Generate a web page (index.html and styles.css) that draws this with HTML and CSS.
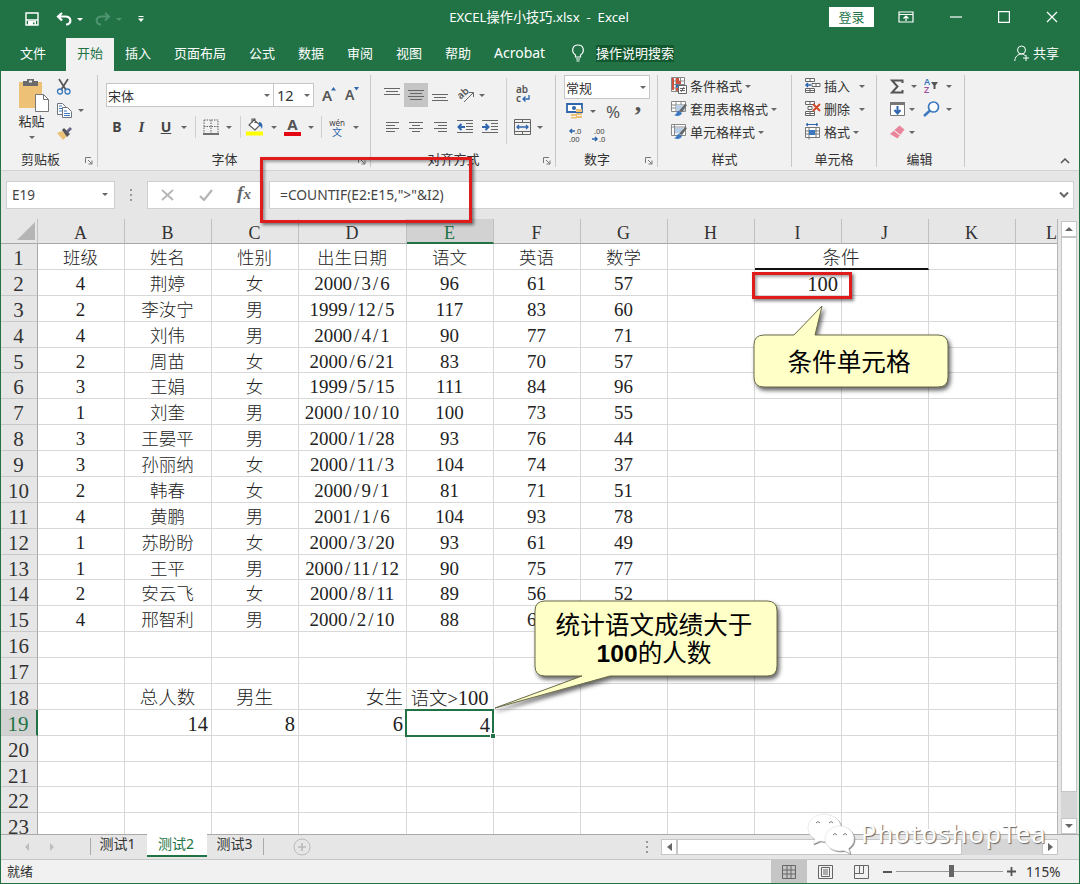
FILE: index.html
```
<!DOCTYPE html>
<html lang="zh-CN">
<head>
  <meta charset="UTF-8" />
  <meta name="viewport" content="width=device-width, initial-scale=1.0" />
  <title>EXCEL操作小技巧.xlsx - Excel</title>
  <link rel="stylesheet" href="styles.css">
</head>
<body>
<div class="window">

  <!-- Title bar -->
  <header class="titlebar">
    <div class="quick">
      <svg width="14" height="14" viewBox="0 0 14 14"><path d="M1 1h12v12H1zM1 8h12" fill="none" stroke="#fff" stroke-width="1.4"/><path d="M3 9h8v4H9.500v-2.500H8V13H3z" fill="#fff"/></svg>
      <svg class="undo" width="17" height="14" viewBox="0 0 17 14"><path d="M6 1L2 4.500L6 8.500M2 4.500h7c7 0 7 8 1 8" fill="none" stroke="#fff" stroke-width="2.200"/></svg>
      <i class="caret light"></i>
      <svg class="redo" width="17" height="14" viewBox="0 0 17 14"><path d="M11 1l4 3.500l-4 4M15 4.500H8c-7 0-7 8-1 8" fill="none" stroke="#4f9470" stroke-width="2"/></svg>
      <i class="caret faded"></i>
      <svg class="more" width="6" height="6" viewBox="0 0 6 6"><path d="M.5 0h5v1h-5zM0 2.500h6L3 6z" fill="#fff"/></svg>
    </div>
    <div class="doc-title">EXCEL操作小技巧.xlsx&nbsp; -&nbsp; Excel</div>
    <div class="win-buttons">
      <button class="login">登录</button>
      <svg width="16" height="12" viewBox="0 0 16 12"><path d="M1 1h14v10H1zM1 3.500h14M8 10V5M5.500 7.500L8 5l2.500 2.500" fill="none" stroke="#fff" stroke-width="1.200"/></svg>
      <svg width="12" height="12" viewBox="0 0 12 12"><path d="M0 6h12" stroke="#fff" stroke-width="1.200"/></svg>
      <svg width="12" height="12" viewBox="0 0 12 12"><path d="M.6.6h10.800v10.800H.6z" fill="none" stroke="#fff" stroke-width="1.200"/></svg>
      <svg width="12" height="12" viewBox="0 0 12 12"><path d="M1 1l10 10M11 1L1 11" stroke="#fff" stroke-width="1.200"/></svg>
    </div>
  </header>

  <!-- Ribbon tabs -->
  <nav class="tabs">
    <span class="tab file">文件</span>
    <span class="tab active">开始</span>
    <span class="tab">插入</span>
    <span class="tab">页面布局</span>
    <span class="tab">公式</span>
    <span class="tab">数据</span>
    <span class="tab">审阅</span>
    <span class="tab">视图</span>
    <span class="tab">帮助</span>
    <span class="tab latin">Acrobat</span>
    <svg class="bulb" width="14" height="18" viewBox="0 0 14 18"><path d="M4.500 13V11C0 8 1 1 7 1s7 7 2.500 10v2zM5 15h4M5.500 17h3" fill="none" stroke="#fff" stroke-width="1.200"/></svg>
    <span class="tell-me">操作说明搜索</span>
    <span class="share">
      <svg width="16" height="17" viewBox="0 0 16 17"><circle cx="7.500" cy="5" r="4" fill="none" stroke="#fff"/><path d="M.8 16c0-4 3-7 6.700-7M7.500 9c2 0 3 .6 4 2M12 10v6M9 13h6" fill="none" stroke="#fff"/></svg>
      共享
    </span>
  </nav>

  <!-- Ribbon -->
  <section class="ribbon">
    <div class="group clipboard">
      <div class="clip-body">
        <div class="paste">
          <svg width="30" height="35" viewBox="0 0 30 35"><path d="M0 4h23v26H0z" fill="#edc277"/><path d="M4 3h4V1h7v2h4v5H4z" fill="#6b6b6b"/><path d="M10 2.500h3v2h-3z" fill="#f1f1f1"/><path d="M16.500 16.500h8l5 5v12h-13z" fill="#fff" stroke="#777"/><path d="M24.500 16.500v5h5" fill="none" stroke="#777"/></svg>
          <span>粘贴</span>
          <i class="caret"></i>
        </div>
        <div class="clip-tools">
          <svg width="16" height="18" viewBox="0 0 16 18"><path d="M3 1l7 11M12 1L5 12" stroke="#555" stroke-width="1.700"/><circle cx="4" cy="13.500" r="2.500" fill="none" stroke="#3b78bd" stroke-width="1.300"/><circle cx="11.500" cy="13.500" r="2.500" fill="none" stroke="#3b78bd" stroke-width="1.300"/></svg>
          <span></span>
          <svg width="17" height="17" viewBox="0 0 17 17"><g fill="#fff" stroke="#6b7480"><path d="M1.500 1.500h5l3 3v8h-8z"/><path d="M6.500 5.500h5l4 4v6h-9z"/></g><path d="M3 4h3M3 6.500h3M3 9h3M8 9h3M8 11.500h6M8 13.500h6" stroke="#3b78bd"/></svg>
          <i class="caret"></i>
          <svg width="16" height="14" viewBox="0 0 16 14"><path d="M1 6l5-2l5 5l-4 4z" fill="#edc277"/><path d="M6 3l2-2l6 6l-3 3z" fill="#555"/><path d="M10 4l4-4l2 2l-4 4z" fill="#666688"/></svg>
        </div>
      </div>
      <div class="label">剪贴板</div>
      <svg class="launcher" viewBox="0 0 8 8"><use href="#launch"/></svg>
    </div>

    <div class="group font">
      <div class="row selects">
        <div class="select name">宋体<i class="caret"></i></div>
        <div class="select size">12<i class="caret"></i></div>
        <span class="grow">A<svg width="5" height="4" viewBox="0 0 5 4"><path d="M0 3.500L2.500 0L5 3.500z" fill="#2f66ad"/></svg></span>
        <span class="grow small">A<svg width="5" height="4" viewBox="0 0 5 4"><path d="M0 0h5L2.500 3.500z" fill="#2f66ad"/></svg></span>
      </div>
      <div class="row styles">
        <b>B</b><em>I</em><u>U</u><i class="caret"></i><i class="sep"></i>
        <svg width="16" height="16" viewBox="0 0 16 16"><path d="M1 1h14v13M1 1v13M8 1v13M1 7.500h14" fill="none" stroke="#666" stroke-dasharray="1.500 1"/><path d="M0 15h16" stroke="#444" stroke-width="1.500"/></svg>
        <i class="caret"></i><i class="sep"></i>
        <svg width="18" height="18" viewBox="0 0 18 18"><path d="M8 2l6 5-5 5-6-5zM6 5V1h3v4" fill="#fff" stroke="#555" stroke-width="1.100"/><path d="M13 4c3 0 4 3 3 7-1-2-1-3-3-3z" fill="#2f66ad"/><path d="M0 13.500h17v4H0z" fill="#ff0"/></svg>
        <i class="caret"></i>
        <span class="font-color">A</span>
        <i class="caret"></i><i class="sep"></i>
        <span class="phonetic"><small>wén</small>文</span>
        <i class="caret"></i>
      </div>
      <div class="label">字体</div>
      <svg class="launcher" viewBox="0 0 8 8"><use href="#launch"/></svg>
    </div>

    <div class="group align">
      <div class="row align-top">
        <svg width="16" height="16" viewBox="0 0 16 16"><path d="M0 1.500h16M2 4.500h12M0 7.500h16" class="ln"/></svg>
        <span class="pressed"><svg width="16" height="16" viewBox="0 0 16 16"><path d="M0 3.500h16M2 6.500h12M0 9.500h16M2 12.500h12" class="ln"/></svg></span>
        <svg width="16" height="16" viewBox="0 0 16 16"><path d="M0 7.500h16M2 10.500h12M0 13.500h16" class="ln"/></svg>
        <svg class="orient" width="18" height="18" viewBox="0 0 18 18"><text x="1" y="11" transform="rotate(-42 6 9)" class="rot">ab</text><path d="M7 16l9-9M12 6.500h4.500V11" class="ln"/></svg>
        <i class="caret"></i><span></span><i class="sep tall"></i>
        <svg class="wrap-icon" width="16" height="20" viewBox="0 0 16 20"><text x="1" y="8" class="wrap">ab</text><text x="1" y="17" class="wrap">c</text><path d="M14 10v4H8M10.500 11.500L8 14l2.500 2.500" fill="none" stroke="#2f66ad" stroke-width="1.300"/></svg>
      </div>
      <div class="row align-bottom">
        <svg width="13" height="12" viewBox="0 0 13 12"><path d="M0 1.500h13M0 4.500h9M0 7.500h13M0 10.500h9" class="ln"/></svg>
        <svg width="14" height="12" viewBox="0 0 14 12"><path d="M0 1.500h14M3 4.500h8M0 7.500h14M3 10.500h8" class="ln"/></svg>
        <svg width="13" height="12" viewBox="0 0 13 12"><path d="M0 1.500h13M4 4.500h9M0 7.500h13M4 10.500h9" class="ln"/></svg>
        <svg width="16" height="14" viewBox="0 0 16 14"><path d="M0 .5h16M9 3.500h7M9 6.500h7M9 9.500h7M0 12.500h16" class="ln"/><path d="M8 7H2M4.500 4L1.500 7l3 3" fill="none" stroke="#2f66ad" stroke-width="2"/></svg>
        <svg width="16" height="14" viewBox="0 0 16 14"><path d="M0 .5h16M9 3.500h7M9 6.500h7M9 9.500h7M0 12.500h16" class="ln"/><path d="M0 7h6M3.500 4l3 3l-3 3" fill="none" stroke="#2f66ad" stroke-width="2"/></svg>
        <i class="sep tall"></i>
        <svg width="17" height="16" viewBox="0 0 17 16"><path d="M.5.500h16v15H.5zM.5 3.500h16M.5 12.500h16M8.500 0v3.500M8.500 12.500V16" class="ln"/><path d="M3 8h11M5 6L3 8l2 2M12 6l2 2l-2 2" fill="none" stroke="#2f66ad" stroke-width="1.300"/></svg>
        <i class="caret"></i>
      </div>
      <div class="label">对齐方式</div>
      <svg class="launcher" viewBox="0 0 8 8"><use href="#launch"/></svg>
    </div>

    <div class="group number">
      <div class="select">常规<i class="caret"></i></div>
      <div class="row money">
        <svg width="18" height="16" viewBox="0 0 18 16"><path d="M1 1h15v8H1z" fill="#fff" stroke="#2f66ad" stroke-width="1.800"/><circle cx="8" cy="5" r="2" fill="#2f66ad"/><path d="M10 6h6v3h-6zM10 10h6v2h-6zM10 13h6v2h-6zM5 11h6v2H5zM5 14h6v1.500H5z" fill="#edc277"/></svg>
        <i class="caret"></i><span class="pct">%</span><span class="comma">,</span>
      </div>
      <div class="row decimals">
        <svg width="16" height="16" viewBox="0 0 16 16"><path d="M7 4H2M4 2L2 4l2 2" fill="none" stroke="#2f66ad" stroke-width="1.500"/><text x="7" y="7" class="dec">.0</text><text x="1" y="15" class="dec">.00</text></svg>
        <svg width="16" height="16" viewBox="0 0 16 16"><text x="2" y="7" class="dec">.00</text><path d="M0 12h5M3 10l2 2l-2 2" fill="none" stroke="#2f66ad" stroke-width="1.500"/><text x="7" y="15" class="dec">.0</text></svg>
      </div>
      <div class="label">数字</div>
      <svg class="launcher" viewBox="0 0 8 8"><use href="#launch"/></svg>
    </div>

    <div class="group style-list">
      <div class="item"><svg width="17" height="17" viewBox="0 0 17 17"><path d="M1.500.500h13v14h-13zM1.500 4h13M1.500 7.500h13M1.500 11h13M6 .5v14M10.500.500v14" fill="#fff" stroke="#888"/><path d="M6 1h3v3H6zM6 11h2v3H6z" fill="#d0533f"/><path d="M6 4h5v3H6zM2 1h2v12H2z" fill="#d0533f"/><path d="M6 7.500h4v3H6z" fill="#2f66ad"/><path d="M8.500 8.500h8v8h-8z" fill="#fff" stroke="#666"/><path d="M10 11.500h5M10 13.500h5M14 10l-3 5" stroke="#444" stroke-width=".8"/></svg>条件格式<i class="caret"></i></div>
      <div class="item"><svg width="17" height="17" viewBox="0 0 17 17"><path d="M1.500 1.500h14v10h-14zM1.500 5h14M1.500 8h14M6 1.500v10M11 1.500v10" fill="#fff" stroke="#888"/><path d="M6 5h9v6H6z" fill="#b8cde6"/><path d="M9 11l6-7l2 1l-5 7z" fill="#666"/><path d="M4 15c3 0 2-4 5-4l3 2c-1 3-5 4-8 2z" fill="#3b78bd"/></svg>套用表格格式<i class="caret"></i></div>
      <div class="item"><svg width="17" height="17" viewBox="0 0 17 17"><path d="M1.500 1.500h14v11h-14zM1.500 4h14M4.500 1.500v11" fill="#fff" stroke="#888"/><path d="M5 4.500h8v6H5z" fill="#b8cde6"/><path d="M9 11l6-7l2 1l-5 7z" fill="#666"/><path d="M4 15c3 0 2-4 5-4l3 2c-1 3-5 4-8 2z" fill="#3b78bd"/></svg>单元格样式<i class="caret"></i></div>
      <div class="label">样式</div>
    </div>

    <div class="group cells">
      <div class="item wide"><svg width="17" height="17" viewBox="0 0 17 17"><path d="M1.500 1.500h9v3h-9zM6 1.500v3M1.500 11.500h9v4h-9zM6 11.500v4M1.500 13.500h9M8 6.500h8v3H8zM12 6.500v3" fill="#fff" stroke="#666"/><path d="M7 8H2M4 6L2 8l2 2" fill="none" stroke="#2f66ad" stroke-width="1.500"/></svg>插入<i class="caret"></i></div>
      <div class="item wide"><svg width="17" height="17" viewBox="0 0 17 17"><path d="M1.500 1.500h9v3h-9zM6 1.500v3M1.500 11.500h9v4h-9zM6 11.500v4M1.500 13.500h9M4 6.500h4v3H4z" fill="#fff" stroke="#666"/><path d="M9 4l7 7M16 4l-7 7" stroke="#d24726" stroke-width="1.800"/></svg>删除<i class="caret"></i></div>
      <div class="item"><svg width="17" height="17" viewBox="0 0 17 17"><path d="M2 1.500h12M4 0L2 1.500L4 3M12 0l2 1.500L12 3" stroke="#2f66ad" fill="none"/><path d="M1.500 4.500h14v10h-14zM1.500 8h14M1.500 11h14M5 4.500v12M12 4.500v10" fill="#fff" stroke="#777"/><path d="M5 7h6v5H5z" fill="#3b78bd"/></svg>格式<i class="caret"></i></div>
      <div class="label">单元格</div>
    </div>

    <div class="group edit">
      <div class="row">
        <svg width="14" height="15" viewBox="0 0 14 15"><path d="M12.500 4V1.500H2L7.500 7.500L2 13.500h10.500V11" fill="none" stroke="#555" stroke-width="2"/></svg>
        <i class="caret nudge"></i>
        <svg width="17" height="18" viewBox="0 0 17 18"><text x="1" y="8" class="az blue">A</text><text x="1" y="16" class="az purple">Z</text><path d="M8 5h7l-2.500 3.500V12h-2V8.500z" fill="#555"/></svg>
        <i class="caret"></i>
      </div>
      <div class="row">
        <svg width="15" height="16" viewBox="0 0 15 16"><path d="M.5 1.500h14v13H.5z" fill="#fff" stroke="#777"/><path d="M0 1h15v3H0z" fill="#777"/><path d="M7.500 5v7M4.500 9l3 3.500l3-3.500" fill="none" stroke="#2f66ad" stroke-width="2"/></svg>
        <i class="caret"></i>
        <svg width="17" height="16" viewBox="0 0 17 16"><circle cx="10.500" cy="6" r="5" fill="#fff" stroke="#3b78bd" stroke-width="1.700"/><path d="M7 9.500L1 15" stroke="#3b78bd" stroke-width="2.400"/></svg>
        <i class="caret"></i>
      </div>
      <div class="row">
        <svg width="15" height="14" viewBox="0 0 15 14"><path d="M9.500.500l5 4-7 9L0 9z" fill="#e8879c"/><path d="M3.500 5l6.500 5" stroke="#fff"/></svg>
        <i class="caret"></i>
      </div>
      <div class="label">编辑</div>
    </div>
    <svg class="collapse" width="10" height="6" viewBox="0 0 10 6"><path d="M1 5l4-4l4 4" fill="none" stroke="#555" stroke-width="1.500"/></svg>
  </section>

  <!-- Formula bar -->
  <section class="formula-bar">
    <div class="name-box">E19<i class="caret"></i></div>
    <div class="grip"><i></i><i></i><i></i></div>
    <div class="fx-buttons">
      <svg width="13" height="12" viewBox="0 0 13 12"><path d="M1 1l11 10M12 1L1 11" stroke="#b5b5b5" stroke-width="1.800"/></svg>
      <svg width="14" height="12" viewBox="0 0 14 12"><path d="M1 7l4 4l8-10" fill="none" stroke="#b5b5b5" stroke-width="2.200"/></svg>
      <span class="fx">f<small>x</small></span>
    </div>
    <div class="formula">=COUNTIF(E2:E15,"&gt;"&amp;I2)
      <svg width="10" height="7" viewBox="0 0 10 7"><path d="M1 1.500l4 4l4-4" fill="none" stroke="#666" stroke-width="2"/></svg>
    </div>
  </section>

  <!-- Worksheet -->
  <main class="sheet-area">
    <div class="grid" id="grid"></div>
    <div class="vscroll">
      <span class="btn"><i class="up"></i></span>
      <span class="thumb"></span>
      <span class="track"></span>
      <span class="btn"><i class="down"></i></span>
    </div>
  </main>

  <!-- Sheet tabs -->
  <footer class="sheet-tabs">
    <i class="nav-left"></i><i class="nav-right"></i>
    <div class="sheets">
      <span>测试1</span><span class="current">测试2</span><span>测试3</span>
    </div>
    <svg class="add" width="18" height="18" viewBox="0 0 18 18"><circle cx="9" cy="9" r="8" fill="none" stroke="#bbb"/><path d="M9 5v8M5 9h8" stroke="#bbb" stroke-width="1.700"/></svg>
    <div class="grip"><i></i><i></i><i></i></div>
    <div class="hscroll">
      <span class="btn"><i class="left"></i></span>
      <span class="thumb"></span>
      <span class="track"></span>
      <span class="btn"><i class="right"></i></span>
    </div>
  </footer>

  <!-- Status bar -->
  <footer class="status">
    <span class="ready">就绪</span>
    <span class="view on"><svg width="14" height="14" viewBox="0 0 14 14"><path d="M.5.500h13v13H.5zM.5 5h13M.5 9h13M5 .5v13M9 .5v13" class="ln"/></svg></span>
    <span class="view"><svg width="15" height="14" viewBox="0 0 15 14"><path d="M.5.500h14v13H.5zM3.500 2.500h8v9h-8zM5 5h5M5 7h5M5 9h5" class="ln"/></svg></span>
    <span class="view"><svg width="15" height="14" viewBox="0 0 15 14"><path d="M.5.500h14v13H.5zM5.500.500v8M9.500.500v8M.5 8.500h9" class="ln"/></svg></span>
    <span class="zoom">
      <i class="minus"></i>
      <span class="slider"><i></i></span>
      <svg width="9" height="9" viewBox="0 0 9 9"><path d="M4.500 0v9M0 4.500h9" stroke="#555" stroke-width="1.800"/></svg>
      <span>115%</span>
    </span>
  </footer>

  <!-- Annotations over the sheet -->
  <div class="mark mark-formula"></div>
  <div class="mark mark-cell"></div>
  <div class="callout callout-cell">
    <svg width="204" height="92" viewBox="0 0 204 92"><path d="M12 31H42L70 2L63 31H186q10 0 10 10V73q0 10-10 10H12q-10 0-10-10V41q0-10 10-10z"/></svg>
    <p>条件单元格</p>
  </div>
  <div class="callout callout-count">
    <svg width="292" height="116" viewBox="0 0 292 116"><path d="M51 2H273q10 0 10 10V67q0 10-10 10H116L1 109L88 77H51q-10 0-10-10V12q0-10 10-10z"/></svg>
    <p>统计语文成绩大于<br><b>100</b>的人数</p>
  </div>
  <div class="watermark">
    <svg width="50" height="42" viewBox="0 0 50 42">
      <path d="M17 1C8 1 1 7 1 15c0 5 3 9 7 11l-2 5l7-3c11 2 21-3 21-13C34 7 26 1 17 1z"/>
      <path d="M33 13c-9 0-15 6-15 13s7 12 15 12l4-.5l6 3l-1.500-5C45 33 47 30 47 26c0-7-6-13-14-13z"/>
      <path class="eyes" d="M9 10q2-3 4 0M22 10q2-3 4 0M26 22q2-3 4 0M36 22q2-3 4 0"/>
    </svg>
    <span>PhotoshopTea</span>
  </div>
</div>

<svg width="0" height="0" class="defs"><symbol id="launch" viewBox="0 0 8 8"><path d="M.5 6V.5H6M3 3l4 4M7 3.500V7H3.500" fill="none" stroke="#777"/></symbol></svg>
<script src="script.js"></script>
</body>
</html>
```
FILE: styles.css
```
* {
  box-sizing: border-box;
}

body {
  margin: 0;
  font-family: "Noto Sans", "Noto Sans CJK SC", sans-serif;
  font-size: 13px;
  color: #333;
}

svg {
  display: block;
  flex: none;
}

.defs {
  position: absolute;
}

.window {
  position: relative;
  width: 1080px;
  height: 884px;
  border: 1px solid #217346;
  border-top: 0;
  background: #e6e6e6;
  overflow: hidden;
  display: flex;
  flex-direction: column;
}

.ln {
  fill: none;
  stroke: #666;
}

.caret {
  display: block;
  flex: none;
  width: 0;
  height: 0;
  border: 3px solid transparent;
  border-top-color: #666;
  border-bottom: 0;
}

.caret.light {
  border-top-color: #fff;
}

.caret.faded {
  border-top-color: #4f9470;
}

/* title bar */
.titlebar {
  height: 38px;
  flex: none;
  background: #217346;
  color: #fff;
  display: grid;
  grid-template-columns: 368px 340px 1fr;
}

.quick {
  display: flex;
  align-items: center;
  padding-left: 24px;
}

.undo {
  margin: 0 4px 0 17px;
}

.redo {
  margin: 0 5px 0 11px;
}

.more {
  margin-left: 16px;
}

.doc-title {
  text-align: center;
  line-height: 35px;
  font-size: 13.2px;
}

.win-buttons {
  display: flex;
  align-items: center;
  padding: 0 0 4px 120px;
}

.win-buttons svg + svg {
  margin-left: 36px;
}

.login {
  width: 45px;
  height: 20px;
  padding: 0;
  margin-right: 24px;
  border: 0;
  background: #fff;
  color: #217346;
  font: inherit;
  line-height: 20px;
}

/* tabs */
.tabs {
  height: 33px;
  flex: none;
  background: #217346;
  color: #fff;
  display: flex;
  align-items: center;
  line-height: 30px;
  padding-bottom: 3px;
}

.tab {
  width: 26px;
  margin-right: 23px;
  white-space: nowrap;
}

.tab:nth-child(4) {
  width: 52px;
}

.tab:nth-child(n + 4) {
  position: static;
}

.tab.file {
  margin: 0 20px 0 19px;
}

.tab.active {
  width: 48px;
  height: 33px;
  margin: 0 11px 0 0;
  padding-left: 11px;
  background: #f1f1f1;
  color: #217346;
  align-self: flex-start;
}

.tab.latin {
  width: 53px;
  margin-right: 24px;
  font-size: 14px;
}

.tell-me {
  margin-left: 11px;
  line-height: 17px;
  background: #13592f;
}

.share {
  margin-left: auto;
  margin-right: 20px;
  display: flex;
  align-items: center;
  gap: 3px;
}

/* ribbon */
.ribbon {
  position: relative;
  height: 100px;
  flex: none;
  padding-top: 4px;
  display: flex;
  background: #f1f1f1;
  border-bottom: 1px solid #d2d2d2;
}

.group {
  position: relative;
  height: 92px;
  display: flex;
  flex-direction: column;
  border-right: 1px solid #c8c8c8;
}

.clipboard { width: 97px; }
.font { width: 273px; }
.align { width: 185px; }
.number { width: 102px; }
.style-list { width: 134px; }
.cells { width: 85px; }
.edit { width: 88px; }

.label {
  margin-top: auto;
  height: 15px;
  line-height: 14px;
  text-align: center;
}

.clipboard .label {
  padding-right: 17px;
}

.font .label,
.align .label,
.number .label {
  padding-right: 19px;
}

.edit .label {
  padding-right: 2px;
}

.launcher {
  position: absolute;
  right: 4px;
  bottom: 2px;
  width: 8px;
  height: 8px;
}

.row {
  height: 24px;
  display: grid;
  grid-template-rows: 24px;
  align-items: center;
  justify-items: center;
}

.clip-body {
  display: flex;
}

.paste {
  width: 52px;
  padding: 3px 0 0 9px;
  display: flex;
  flex-direction: column;
  align-items: center;
}

.paste svg {
  margin-left: 4px;
}

.paste span {
  line-height: 16px;
  margin-bottom: 7px;
}

.clip-tools {
  display: grid;
  grid-template: repeat(3, 23.5px) / 22px 12px;
  align-items: center;
  justify-items: center;
}

.select {
  display: flex;
  align-items: center;
  justify-content: space-between;
  height: 24px;
  border: 1px solid #c6c6c6;
  background: #fff;
  padding: 0 3px 0 1px;
}

.selects {
  margin-top: 8px;
  padding-left: 8px;
  grid-template-columns: 168px 40px 26px 22px;
  justify-items: stretch;
}

.select.size {
  border-left: 0;
  padding-left: 3px;
  font-size: 14.5px;
}

.grow {
  position: relative;
  padding-left: 8px;
  line-height: 24px;
  font-size: 15px;
  font-weight: 600;
  color: #555;
}

.grow.small {
  padding-left: 5px;
  font-size: 14px;
}

.grow svg {
  position: absolute;
  left: 17px;
  top: 4px;
}

.grow.small svg {
  left: 14px;
}

.styles {
  margin-top: 8px;
  padding-left: 7px;
  grid-template-columns: 24px 25px 24px 12px 10px 22px 14px 8px 22px 16px 21px 15px 6px 26px 12px;
}

.styles b,
.styles em,
.styles u {
  line-height: 20px;
  margin-top: -1px;
  font-size: 14px;
  font-weight: 700;
  color: #444;
}

.styles em {
  font-family: "Liberation Serif", serif;
  font-size: 15px;
}

.sep {
  width: 1px;
  height: 22px;
  background: #d0d0d0;
}

.sep.tall {
  height: 34px;
}

.font-color {
  width: 17px;
  height: 18px;
  line-height: 13px;
  text-align: center;
  font-size: 15px;
  font-weight: 700;
  color: #555;
  border-bottom: 4px solid #e30613;
}

.phonetic {
  font-size: 10px;
  line-height: 10px;
  text-align: center;
  color: #2f66ad;
}

.phonetic small {
  display: block;
  font-size: 8px;
  line-height: 9px;
  color: #444;
}

.align-top {
  margin-top: 8px;
  padding-left: 9px;
  justify-content: start;
  grid-template-columns: 24px 24px 24px 27px 6px 17px 8px 26px;
}

.align-bottom {
  margin-top: 8px;
  padding-left: 9px;
  justify-content: start;
  grid-template-columns: 24px 24px 24px 26px 24px 8px 24px 12px;
}

.pressed {
  width: 24px;
  height: 24px;
  padding: 4px;
  background: #c5c5c5;
}

.orient,
.wrap-icon {
  overflow: visible;
}

.rot,
.wrap {
  font-size: 10px;
  font-weight: 600;
  fill: #555;
}

.az {
  font-size: 9px;
  font-weight: 600;
}

.az.blue {
  fill: #3b78bd;
}

.az.purple {
  fill: #9b4fa5;
}

.dec {
  font-size: 7.5px;
  fill: #444;
}

.number .select {
  width: 86px;
  margin-left: 8px;
}

.money {
  justify-content: start;
  padding-left: 9px;
  grid-template-columns: 20px 16px 24px 26px;
}

.pct {
  font-size: 17px;
  color: #555;
}

.comma {
  font: bold 26px/10px "Liberation Serif", serif;
  margin-top: -16px;
  color: #555;
}

.decimals {
  justify-content: start;
  padding-left: 8px;
  grid-template-columns: 24px 24px;
}

.item {
  height: 23px;
  display: flex;
  align-items: center;
  padding: 0 0 2px 12px;
  white-space: nowrap;
}

.item svg {
  margin-right: 3px;
}

.item .caret {
  margin: 2px 0 0 3px;
}

.item.wide .caret {
  margin-left: 9px;
}

.edit .row {
  height: 23px;
  grid-template-rows: 22px;
  justify-content: start;
  padding-left: 11px;
  grid-template-columns: 18px 12px 27px 8px;
}

.nudge {
  margin-left: 4px;
}

.collapse {
  position: absolute;
  right: 9px;
  bottom: 6px;
}

/* formula bar */
.formula-bar {
  height: 48px;
  flex: none;
  padding: 10px 5px 10px 5px;
  display: flex;
  color: #444;
}

.name-box {
  width: 109px;
  height: 28px;
  display: flex;
  align-items: center;
  justify-content: space-between;
  padding: 0 6px 1px 5px;
  border: 1px solid #cfcfcf;
  background: #fff;
  font-size: 13.5px;
}

.grip {
  width: 32px;
  display: flex;
  flex-direction: column;
  align-items: center;
  justify-content: center;
  gap: 3px;
}

.grip i {
  width: 2px;
  height: 2px;
  background: #999;
}

.fx-buttons {
  width: 117px;
  height: 28px;
  display: grid;
  grid-template-columns: 38px 40px 36px;
  align-items: center;
  justify-items: center;
  border: 1px solid #cfcfcf;
  background: #fff;
}

.fx {
  font: italic bold 19px/22px "Liberation Serif", serif;
  margin-top: -3px;
  color: #666;
}

.fx small {
  font-size: 15px;
}

.formula {
  flex: 1;
  height: 28px;
  margin-left: 5px;
  padding: 0 4px 1px 10px;
  display: flex;
  align-items: center;
  justify-content: space-between;
  border: 1px solid #cfcfcf;
  background: #fff;
  font-size: 13.8px;
}

/* worksheet */
.sheet-area {
  height: 615px;
  flex: none;
  display: flex;
  overflow: hidden;
}

.grid {
  width: 1057px;
  height: 615px;
  display: grid;
  grid-template-columns: 37px 87px 87px 87px 108px 87px 87px 87px 87px 87px 87px 87px 42px;
  grid-template-rows: 25px;
  grid-auto-rows: 25.88px;
  overflow: hidden;
  border-right: 1px solid #b5b5b5;
  font-family: "Liberation Serif", "Noto Sans CJK SC", serif;
  font-size: 17.5px;
  font-weight: 300;
  line-height: 28px;
}

.cell {
  background: #fff;
  border-right: 1px solid #d8d8d8;
  border-bottom: 1px solid #d8d8d8;
  padding-right: 1px;
  text-align: center;
  white-space: nowrap;
  overflow: hidden;
  color: #222;
}

.cell .num {
  font-size: 18.9px;
}

.num i {
  display: inline-block;
  width: 9.4px;
  font-style: normal;
}

.cell.right {
  text-align: right;
  padding-right: 3px;
}

.cell.total {
  font-size: 18.5px;
}

.cell.total .num {
  font-size: 20.5px;
}

.head {
  background: #e6e6e6;
  border-right: 1px solid #c0c0c0;
  border-bottom: 1px solid #a8a8a8;
  padding-right: 1px;
  text-align: center;
  font-size: 18px;
  line-height: 29px;
  font-weight: 400;
  overflow: hidden;
}

.head.corner {
  display: flex;
  align-items: flex-end;
  justify-content: flex-end;
  padding: 0 2px 3px 0;
}

.corner i {
  border-left: 18px solid transparent;
  border-bottom: 18px solid #b5b5b5;
}

.head.side {
  font-size: 21px;
  line-height: 28px;
  border-right-color: #a8a8a8;
  border-bottom-color: #c8c8c8;
}

.head.last {
  text-align: right;
  padding-right: 0;
}

.head.chosen {
  background: #d2d2d2;
  border-bottom: 2px solid #217346;
  color: #217346;
}

.head.side.chosen {
  border-right: 2px solid #217346;
  border-bottom: 1px solid #c8c8c8;
}

.cell.merged {
  grid-column: span 2;
  border-bottom: 2px solid #111;
  font-size: 18.5px;
}

.cell.selected {
  position: relative;
  overflow: visible;
  margin: -1px 0 -1px -2px;
  border: 2px solid #217346;
  padding-right: 2px;
}

.cell.selected::after {
  content: "";
  position: absolute;
  right: -3px;
  bottom: -3px;
  width: 4px;
  height: 4px;
  background: #217346;
  outline: 1px solid #fff;
}

.vscroll {
  margin-left: 3px;
  padding-top: 2px;
  width: 16px;
  display: flex;
  flex-direction: column;
}

.btn {
  display: flex;
  align-items: center;
  justify-content: center;
  width: 16px;
  height: 16px;
  border: 1px solid #c6c6c6;
  background: #fff;
}

.btn i {
  border: 4px solid transparent;
}

.btn .up {
  border-top: 0;
  border-bottom-color: #666;
}

.btn .down {
  border-bottom: 0;
  border-top-color: #666;
}

.btn .left {
  border-left: 0;
  border-right: 5px solid #666;
}

.btn .right {
  border-right: 0;
  border-left: 5px solid #666;
}

.vscroll .thumb {
  height: 555px;
  border: 1px solid #c6c6c6;
  background: #fff;
}

.track {
  flex: 1;
  background: #d6d6d6;
}

/* sheet tabs */
.sheet-tabs {
  height: 25px;
  flex: none;
  display: flex;
  border-top: 1px solid #aaa;
}

.nav-left,
.nav-right {
  align-self: center;
  border: 4px solid transparent;
}

.nav-left {
  margin-left: 24px;
  border-left: 0;
  border-right-color: #bdbdbd;
}

.nav-right {
  margin-left: 21px;
  border-right: 0;
  border-left-color: #bdbdbd;
}

.sheets {
  height: 22px;
  margin-left: 36px;
  display: flex;
  line-height: 18px;
  font-size: 14px;
}

.sheets span {
  width: 57px;
  text-align: center;
  padding-right: 2px;
}

.sheets span:first-child {
  background: linear-gradient(#aaa, #aaa) 0 3px / 1px 17px no-repeat;
}

.sheets span:last-child {
  background: linear-gradient(#aaa, #aaa) 100% 3px / 1px 17px no-repeat;
}

.sheets .current {
  width: 60px;
  margin-top: -1px;
  line-height: 20px;
  background: #fff;
  color: #217346;
  border-bottom: 2px solid #217346;
}

.add {
  margin: 3px 0 0 29px;
}

.sheet-tabs .grip {
  margin: 0 5px 0 327px;
  width: 18px;
}

.hscroll {
  width: 397px;
  height: 16px;
  margin-top: 4px;
  display: flex;
}

.hscroll .thumb {
  width: 285px;
  border: 1px solid #c6c6c6;
  background: #fff;
}

/* status bar */
.status {
  flex: 1;
  display: flex;
  align-items: center;
  background: #f1f1f1;
  border-top: 1px solid #c6c6c6;
}

.ready {
  flex: 1;
  padding: 0 0 2px 6px;
}

.view {
  width: 36px;
  height: 100%;
  display: flex;
  align-items: center;
  justify-content: center;
}

.view.on {
  background: #c5c5c5;
}

.zoom {
  width: 200px;
  padding-left: 4px;
  display: flex;
  align-items: center;
}

.minus {
  width: 9px;
  height: 2px;
  background: #555;
}

.slider {
  position: relative;
  width: 107px;
  height: 1px;
  margin: 0 4px;
  background: #999;
}

.slider i {
  position: absolute;
  left: 53px;
  top: -6px;
  width: 5px;
  height: 12px;
  background: #666;
}

.zoom > span:last-child {
  margin-left: 10px;
  font-size: 13.5px;
}

/* annotations */
.mark {
  position: absolute;
  border: 3px solid #e01b1b;
  box-shadow: 2px 2px 3px rgba(0, 0, 0, 0.5), inset 2px 2px 3px rgba(0, 0, 0, 0.35);
}

.mark-formula {
  left: 259px;
  top: 157px;
  width: 212px;
  height: 66px;
}

.mark-cell {
  left: 751px;
  top: 272px;
  width: 100px;
  height: 27px;
}

.callout {
  position: absolute;
}

.callout svg {
  overflow: visible;
  filter: drop-shadow(2px 3px 2px rgba(0, 0, 0, 0.6));
}

.callout path {
  fill: #ffffc8;
  stroke: #6b6b4a;
}

.callout p {
  position: absolute;
  margin: 0;
  text-align: center;
  white-space: nowrap;
  color: #000;
  font-family: "Liberation Sans", "Noto Sans CJK SC", sans-serif;
  font-size: 24.6px;
  line-height: 28px;
}

.callout-cell {
  left: 751px;
  top: 304px;
}

.callout-cell p {
  left: 0;
  width: 194px;
  top: 45px;
}

.callout-count {
  left: 493px;
  top: 599px;
}

.callout-count p {
  left: 40px;
  width: 240px;
  top: 13px;
}

.watermark {
  position: absolute;
  left: 806px;
  top: 811px;
  display: flex;
  color: #fff;
  font-size: 25px;
  line-height: 44px;
  letter-spacing: 1.5px;
  text-shadow: 1px 1px 1px #666;
}

.watermark svg {
  margin: 2px 4px 0 0;
  filter: drop-shadow(1px 1px 0 #888);
}

.watermark path {
  fill: #fff;
  stroke: #ddd;
  stroke-width: 0.6;
}

.watermark .eyes {
  fill: none;
  stroke: #777;
  stroke-width: 1;
}
```
FILE: script.js
```
const rows = [
  ['班级', '姓名', '性别', '出生日期', '语文', '英语', '数学'],
  ['4', '荆婷', '女', '2000/3/6', '96', '61', '57'],
  ['2', '李汝宁', '男', '1999/12/5', '117', '83', '60'],
  ['4', '刘伟', '男', '2000/4/1', '90', '77', '71'],
  ['2', '周苗', '女', '2000/6/21', '83', '70', '57'],
  ['3', '王娟', '女', '1999/5/15', '111', '84', '96'],
  ['1', '刘奎', '男', '2000/10/10', '100', '73', '55'],
  ['3', '王晏平', '男', '2000/1/28', '93', '76', '44'],
  ['3', '孙丽纳', '女', '2000/11/3', '104', '74', '37'],
  ['2', '韩春', '女', '2000/9/1', '81', '71', '51'],
  ['4', '黄鹏', '男', '2001/1/6', '104', '93', '78'],
  ['1', '苏盼盼', '女', '2000/3/20', '93', '61', '49'],
  ['1', '王平', '男', '2000/11/12', '90', '75', '77'],
  ['2', '安云飞', '女', '2000/8/11', '89', '56', '52'],
  ['4', '邢智利', '男', '2000/2/10', '88', '68', '']
];
rows[17] = ['', '总人数', '男生', '女生', '语文>100'];
rows[18] = ['', '14', '8', '6', '4'];

const grid = document.getElementById('grid');

function add(cls, html) {
  const el = document.createElement('div');
  el.className = cls;
  el.innerHTML = html;
  grid.appendChild(el);
}

// digits get their own size, slashes take a full digit width
function format(text) {
  return text
    .replace('>', '&gt;')
    .replace(/[0-9/]+/g, m => '<span class="num">' + m.replace(/\//g, '<i>/</i>') + '</span>');
}

add('head corner', '<i></i>');
for (const letter of 'ABCDEFGHIJKL') {
  add('head' + (letter === 'E' ? ' chosen' : '') + (letter === 'L' ? ' last' : ''), letter);
}

for (let r = 0; r < 23; r++) {
  add('head side' + (r === 18 ? ' chosen' : ''), r + 1);
  for (let c = 0; c < 12; c++) {
    if (r === 0 && c === 8) {
      add('cell merged', '条件');
      c++;
      continue;
    }
    let cls = 'cell';
    let text = (rows[r] && rows[r][c]) || '';
    if (r >= 17) cls += ' total';
    if (r === 18 || (r === 17 && c === 3)) cls += ' right';
    if (r === 18 && c === 4) cls += ' selected';
    if (r === 1 && c === 8) {
      cls += ' right total';
      text = '100';
    }
    add(cls, format(text));
  }
}
```
